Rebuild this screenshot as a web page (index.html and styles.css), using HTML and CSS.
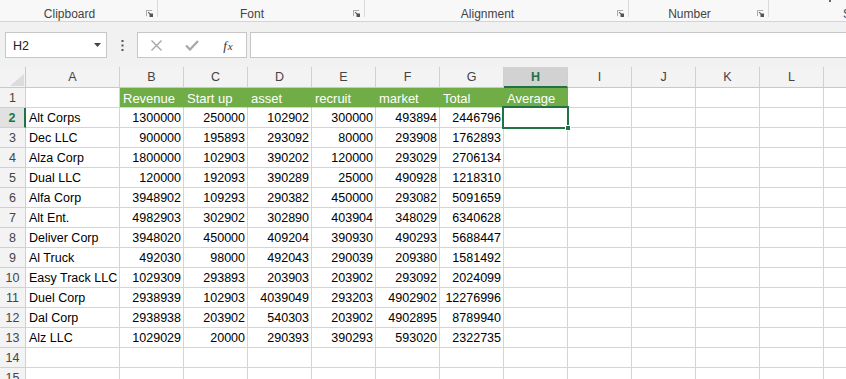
FILE: index.html
```html
<!DOCTYPE html>
<html>
<head>
<meta charset="utf-8">
<link rel="stylesheet" href="styles.css">
</head>
<body>
<div class="ribbon">
  <div class="group g-clip"><span class="glabel">Clipboard</span><svg class="launch" viewBox="0 0 8 8"><path d="M0.5 7V0.5H7" fill="none" stroke="#9a9a9a"/><path d="M2.5 2.5L6 6" stroke="#555" stroke-width="1.2"/><rect x="4" y="4" width="4" height="4" fill="#555"/></svg></div>
  <div class="group g-font"><span class="glabel">Font</span><svg class="launch" viewBox="0 0 8 8"><path d="M0.5 7V0.5H7" fill="none" stroke="#9a9a9a"/><path d="M2.5 2.5L6 6" stroke="#555" stroke-width="1.2"/><rect x="4" y="4" width="4" height="4" fill="#555"/></svg></div>
  <div class="group g-align"><span class="glabel">Alignment</span><svg class="launch" viewBox="0 0 8 8"><path d="M0.5 7V0.5H7" fill="none" stroke="#9a9a9a"/><path d="M2.5 2.5L6 6" stroke="#555" stroke-width="1.2"/><rect x="4" y="4" width="4" height="4" fill="#555"/></svg></div>
  <div class="group g-num"><span class="glabel">Number</span><svg class="launch" viewBox="0 0 8 8"><path d="M0.5 7V0.5H7" fill="none" stroke="#9a9a9a"/><path d="M2.5 2.5L6 6" stroke="#555" stroke-width="1.2"/><rect x="4" y="4" width="4" height="4" fill="#555"/></svg></div>
  <div class="group g-styles"><span class="tick"></span><span class="slabel">Styles</span></div>
</div>

<div class="fbar">
  <div class="namebox"><span>H2</span><svg class="caret" viewBox="0 0 7 4"><path d="M0 0H7L3.5 4Z" fill="#444"/></svg></div>
  <div class="dots"><svg viewBox="0 0 3 12" width="3" height="12"><rect x="0.5" y="0" width="2" height="2" fill="#555"/><rect x="0.5" y="4.5" width="2" height="2" fill="#555"/><rect x="0.5" y="9" width="2" height="2" fill="#555"/></svg></div>
  <div class="fbtns">
    <span class="fb"><svg viewBox="0 0 11 11" width="11" height="11"><path d="M0.5 0.5L10.5 10.5M10.5 0.5L0.5 10.5" stroke="#a6a6a6" stroke-width="1.4"/></svg></span>
    <span class="fb"><svg viewBox="0 0 14 11" width="14" height="11"><path d="M1 5.5L5 9.5L13 1" fill="none" stroke="#a6a6a6" stroke-width="2.2"/></svg></span>
    <span class="fb fx"><i>f</i><i class="x">x</i></span>
  </div>
  <div class="finput"></div>
</div>

<div class="sheet">
  <div class="c corner"><svg viewBox="0 0 14 12" width="14" height="12"><path d="M14 0V12H0Z" fill="#dcdcdc"/></svg></div>
  <div class="c ch">A</div><div class="c ch">B</div><div class="c ch">C</div><div class="c ch">D</div><div class="c ch">E</div><div class="c ch">F</div><div class="c ch">G</div><div class="c ch sel">H</div><div class="c ch">I</div><div class="c ch">J</div><div class="c ch">K</div><div class="c ch">L</div><div class="c ch">M</div>

  <div class="c rh">1</div><div class="c"></div><div class="c g">Revenue</div><div class="c g">Start up</div><div class="c g">asset</div><div class="c g">recruit</div><div class="c g">market</div><div class="c g">Total</div><div class="c g">Average</div><div class="c"></div><div class="c"></div><div class="c"></div><div class="c"></div><div class="c"></div>

  <div class="c rh rsel">2</div><div class="c t">Alt Corps</div><div class="c n">1300000</div><div class="c n">250000</div><div class="c n">102902</div><div class="c n">300000</div><div class="c n">493894</div><div class="c n">2446796</div><div class="c active"><span class="selbox"></span><span class="handle"></span></div><div class="c"></div><div class="c"></div><div class="c"></div><div class="c"></div><div class="c"></div>

  <div class="c rh">3</div><div class="c t">Dec LLC</div><div class="c n">900000</div><div class="c n">195893</div><div class="c n">293092</div><div class="c n">80000</div><div class="c n">293908</div><div class="c n">1762893</div><div class="c"></div><div class="c"></div><div class="c"></div><div class="c"></div><div class="c"></div><div class="c"></div>

  <div class="c rh">4</div><div class="c t">Alza Corp</div><div class="c n">1800000</div><div class="c n">102903</div><div class="c n">390202</div><div class="c n">120000</div><div class="c n">293029</div><div class="c n">2706134</div><div class="c"></div><div class="c"></div><div class="c"></div><div class="c"></div><div class="c"></div><div class="c"></div>

  <div class="c rh">5</div><div class="c t">Dual LLC</div><div class="c n">120000</div><div class="c n">192093</div><div class="c n">390289</div><div class="c n">25000</div><div class="c n">490928</div><div class="c n">1218310</div><div class="c"></div><div class="c"></div><div class="c"></div><div class="c"></div><div class="c"></div><div class="c"></div>

  <div class="c rh">6</div><div class="c t">Alfa Corp</div><div class="c n">3948902</div><div class="c n">109293</div><div class="c n">290382</div><div class="c n">450000</div><div class="c n">293082</div><div class="c n">5091659</div><div class="c"></div><div class="c"></div><div class="c"></div><div class="c"></div><div class="c"></div><div class="c"></div>

  <div class="c rh">7</div><div class="c t">Alt Ent.</div><div class="c n">4982903</div><div class="c n">302902</div><div class="c n">302890</div><div class="c n">403904</div><div class="c n">348029</div><div class="c n">6340628</div><div class="c"></div><div class="c"></div><div class="c"></div><div class="c"></div><div class="c"></div><div class="c"></div>

  <div class="c rh">8</div><div class="c t">Deliver Corp</div><div class="c n">3948020</div><div class="c n">450000</div><div class="c n">409204</div><div class="c n">390930</div><div class="c n">490293</div><div class="c n">5688447</div><div class="c"></div><div class="c"></div><div class="c"></div><div class="c"></div><div class="c"></div><div class="c"></div>

  <div class="c rh">9</div><div class="c t">Al Truck</div><div class="c n">492030</div><div class="c n">98000</div><div class="c n">492043</div><div class="c n">290039</div><div class="c n">209380</div><div class="c n">1581492</div><div class="c"></div><div class="c"></div><div class="c"></div><div class="c"></div><div class="c"></div><div class="c"></div>

  <div class="c rh">10</div><div class="c t">Easy Track LLC</div><div class="c n">1029309</div><div class="c n">293893</div><div class="c n">203903</div><div class="c n">203902</div><div class="c n">293092</div><div class="c n">2024099</div><div class="c"></div><div class="c"></div><div class="c"></div><div class="c"></div><div class="c"></div><div class="c"></div>

  <div class="c rh">11</div><div class="c t">Duel Corp</div><div class="c n">2938939</div><div class="c n">102903</div><div class="c n">4039049</div><div class="c n">293203</div><div class="c n">4902902</div><div class="c n">12276996</div><div class="c"></div><div class="c"></div><div class="c"></div><div class="c"></div><div class="c"></div><div class="c"></div>

  <div class="c rh">12</div><div class="c t">Dal Corp</div><div class="c n">2938938</div><div class="c n">203902</div><div class="c n">540303</div><div class="c n">203902</div><div class="c n">4902895</div><div class="c n">8789940</div><div class="c"></div><div class="c"></div><div class="c"></div><div class="c"></div><div class="c"></div><div class="c"></div>

  <div class="c rh">13</div><div class="c t">Alz LLC</div><div class="c n">1029029</div><div class="c n">20000</div><div class="c n">290393</div><div class="c n">390293</div><div class="c n">593020</div><div class="c n">2322735</div><div class="c"></div><div class="c"></div><div class="c"></div><div class="c"></div><div class="c"></div><div class="c"></div>

  <div class="c rh">14</div><div class="c"></div><div class="c"></div><div class="c"></div><div class="c"></div><div class="c"></div><div class="c"></div><div class="c"></div><div class="c"></div><div class="c"></div><div class="c"></div><div class="c"></div><div class="c"></div><div class="c"></div>

  <div class="c rh">15</div><div class="c"></div><div class="c"></div><div class="c"></div><div class="c"></div><div class="c"></div><div class="c"></div><div class="c"></div><div class="c"></div><div class="c"></div><div class="c"></div><div class="c"></div><div class="c"></div><div class="c"></div>
</div>
</body>
</html>
```

FILE: styles.css
```css
* { box-sizing: border-box; }

body {
  margin: 0;
  width: 846px;
  height: 379px;
  overflow: hidden;
  background: #ffffff;
  font-family: "Liberation Sans", Arial, sans-serif;
  color: #000;
}

/* ---------- ribbon ---------- */
.ribbon {
  height: 22px;
  background: #f8f8f8;
  border-bottom: 1px solid #d4d4d4;
  display: flex;
  align-items: flex-start;
}
.group {
  height: 17px;
  flex: none;
  display: flex;
  align-items: flex-start;
  border-right: 1px solid #dadada;
}
.g-clip { width: 158px; }
.g-font { width: 207px; }
.g-align { width: 264px; }
.g-num { width: 140px; }
.g-styles { flex: 1; border-right: none; }
.glabel {
  flex: 1;
  text-align: center;
  font-size: 12px;
  line-height: 14px;
  padding-top: 7px;
  color: #444;
  white-space: nowrap;
}
.launch {
  flex: none;
  width: 7px;
  height: 7px;
  margin: 10px 4px 0 7px;
}
.tick {
  width: 2px;
  height: 2px;
  background: #666;
  margin-left: 60px;
}
.slabel {
  font-size: 12px;
  line-height: 14px;
  padding-top: 7px;
  margin-left: 12px;
  color: #444;
  white-space: nowrap;
}

/* ---------- formula bar ---------- */
.fbar {
  height: 45px;
  background: #f1f1f1;
  display: flex;
  align-items: flex-start;
  padding: 10px 0 0 5px;
}
.namebox {
  width: 102px;
  height: 26px;
  background: #fff;
  border: 1px solid #c6c6c6;
  display: flex;
  align-items: center;
  justify-content: space-between;
  padding: 2px 5px 0 7px;
  font-size: 12.5px;
  color: #222;
}
.caret { width: 7px; height: 4px; margin-top: -2px; }
.dots {
  width: 30px;
  height: 26px;
  display: flex;
  justify-content: center;
  padding-top: 8px;
}
.fbtns {
  width: 110px;
  height: 26px;
  background: #fff;
  border: 1px solid #c6c6c6;
  display: flex;
  align-items: center;
}
.fb {
  width: 36px;
  display: flex;
  justify-content: center;
  align-items: center;
}
.fx {
  font-family: "Liberation Serif", "Times New Roman", serif;
  font-size: 13px;
  color: #333;
  padding-top: 1px;
}
.fx i { font-style: italic; }
.fx .x { font-size: 11px; margin-left: 1px; }
.finput {
  flex: 1;
  height: 26px;
  margin-left: 3px;
  background: #fff;
  border: 1px solid #c6c6c6;
  border-right: none;
}

/* ---------- sheet ---------- */
.sheet {
  display: grid;
  grid-template-columns: 26px 94px repeat(12, 64px);
  grid-template-rows: 21px;
  grid-auto-rows: 20px;
  font-size: 12.5px;
}
.c {
  border-right: 1px solid #d4d4d4;
  border-bottom: 1px solid #d4d4d4;
  line-height: 19px;
  padding-top: 1px;
  white-space: nowrap;
  overflow: visible;
}
.corner {
  background: #f3f3f3;
  border-color: #c8c8c8;
  display: flex;
  align-items: flex-end;
  justify-content: flex-end;
  padding: 0 1px 1px 0;
}
.corner svg { display: block; }
.ch {
  background: #f3f3f3;
  border-color: #d0d0d0;
  border-bottom-color: #c8c8c8;
  text-align: center;
  color: #444;
  font-size: 12.5px;
  line-height: 19px;
}
.ch.sel {
  background: #d2d2d2;
  color: #217346;
  font-weight: bold;
  border-bottom: 2px solid #217346;
}
.rh {
  background: #f3f3f3;
  border-color: #d0d0d0;
  text-align: center;
  color: #444;
}
.rh.rsel {
  background: #e1e1e1;
  color: #217346;
  font-weight: bold;
  border-right: 2px solid #217346;
}
.t { padding-left: 3px; }
.n { text-align: right; padding-right: 2px; }
.g {
  background: #70ad47;
  border-right-color: #70ad47;
  color: #fff;
  padding-left: 3px;
  font-size: 13px;
}
.active { position: relative; }
.selbox {
  position: absolute;
  left: -2px;
  top: -2px;
  width: 67px;
  height: 23px;
  border: 2px solid #217346;
}
.handle {
  position: absolute;
  left: 61px;
  top: 17px;
  width: 6px;
  height: 6px;
  background: #217346;
  border: 1px solid #fff;
}
```
